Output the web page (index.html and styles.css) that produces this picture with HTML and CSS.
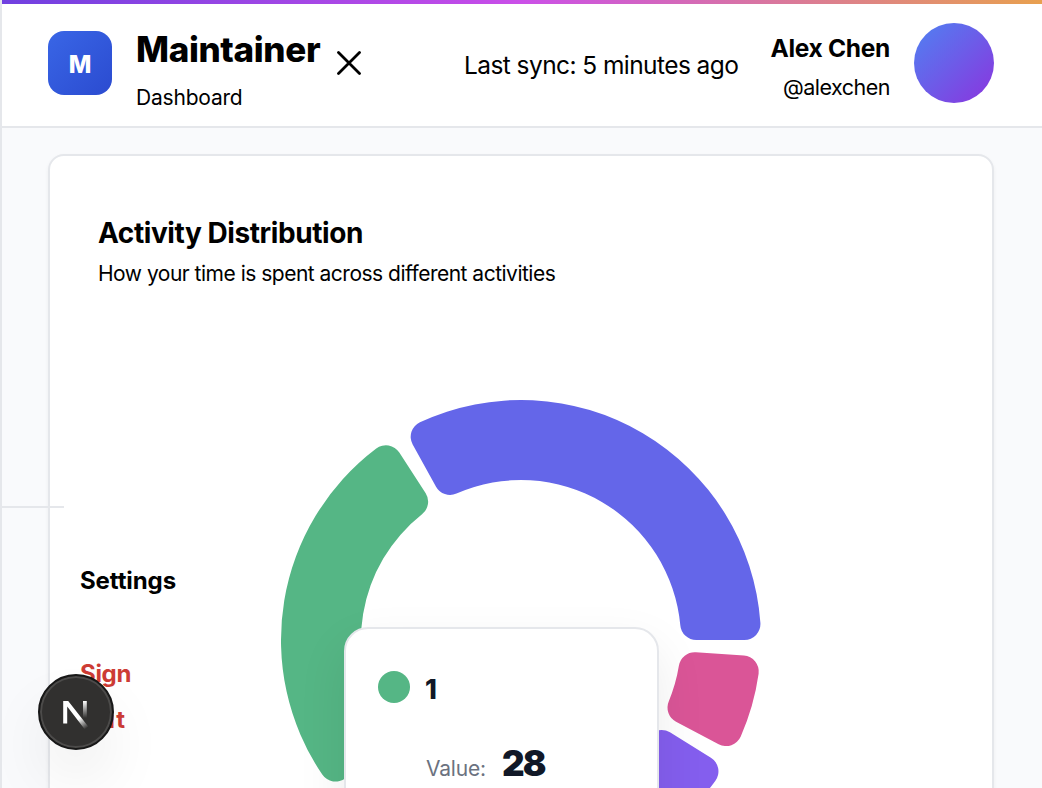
FILE: index.html
```html
<!DOCTYPE html>
<html lang="en">
<head>
<meta charset="utf-8">
<title>Maintainer Dashboard</title>
<link rel="stylesheet" href="styles.css">
</head>
<body>
<div class="app">
  <div class="accent"></div>
  <header class="header">
    <div class="logo">M</div>
    <div class="brand">
      <div class="brand-name">Maintainer</div>
      <div class="brand-sub">Dashboard</div>
    </div>
    <svg class="close" viewBox="0 0 24 24"><path d="M1.500 1.500l21 21M22.500 1.500l-21 21"/></svg>
    <div class="sync">Last sync: 5 minutes ago</div>
    <div class="user">
      <div class="user-name">Alex Chen</div>
      <div class="user-handle">@alexchen</div>
    </div>
    <div class="avatar"></div>
  </header>
  <main class="main">
    <section class="card">
      <h2 class="card-title">Activity Distribution</h2>
      <p class="card-sub">How your time is spent across different activities</p>
      <div class="chart">
        <svg id="donut" class="donut" viewBox="-240 -240 480 480"></svg>
        <div class="tooltip">
          <div class="tip-head"><span class="dot"></span><span class="tip-label">1</span></div>
          <div class="tip-row"><span class="tip-key">Value:</span><span class="tip-value">28</span></div>
        </div>
      </div>
    </section>
  </main>
  <nav class="side">
    <div class="side-rule"></div>
    <a class="side-link">Settings</a>
    <a class="side-link signout">Sign<br><span class="out">Out</span></a>
  </nav>
  <div class="badge">
    <svg class="badge-n" viewBox="0 0 28 32">
      <defs>
        <linearGradient id="diag" gradientUnits="userSpaceOnUse" x1="18" y1="20" x2="25" y2="30"><stop stop-color="#fff"/><stop offset="1" stop-color="#fff" stop-opacity="0"/></linearGradient>
        <linearGradient id="stem" gradientUnits="userSpaceOnUse" x1="0" y1="3" x2="0" y2="20"><stop stop-color="#fff"/><stop offset="1" stop-color="#fff" stop-opacity="0"/></linearGradient>
      </defs>
      <path d="M1.200 3h5l20 25.500-3.500 2.800L5.200 8.600V25.500h-4z" fill="url(#diag)"/>
      <path d="M21 3h3.800v18H21z" fill="url(#stem)"/>
    </svg>
  </div>
</div>
<script src="chart.js"></script>
</body>
</html>
```
FILE: styles.css
```css
* { box-sizing: border-box; }
body { margin: 0; font-family: Inter, "Liberation Sans", sans-serif; color: #000; background: #f9fafb; }
.app { position: relative; width: 1042px; height: 788px; overflow: hidden; background: #f9fafc; border-left: 2px solid #e5e7eb; }
.accent { height: 4px; background: linear-gradient(90deg, #7040e0, #c04be8 45%, #cb50e8 50%, #e8a04f); }
.header { display: flex; align-items: center; height: 124px; padding: 0 48px 4px 46px; background: #fff; border-bottom: 2px solid #e5e7eb; }
.header > * { flex-shrink: 0; white-space: nowrap; }
.logo { width: 64px; height: 64px; border-radius: 16px; background: linear-gradient(135deg, #3966e6, #2b4bd0); color: #fff; font-weight: 800; font-size: 24px; line-height: 67px; text-align: center; }
.brand { width: 186px; margin-left: 24px; padding-top: 14px; }
.brand-name { font-weight: 800; font-size: 35px; line-height: 45px; letter-spacing: -0.35px; }
.brand-sub { font-size: 21px; line-height: 32px; margin-top: 10px; letter-spacing: -0.2px; }
.close { width: 24px; height: 24px; margin-left: 15px; fill: none; stroke: #000; stroke-width: 2.8; stroke-linecap: round; }
.sync { width: 275px; margin-left: 103px; padding-top: 3px; font-size: 24.5px; letter-spacing: -0.57px; }
.user { width: 151px; text-align: right; padding-top: 7px; }
.user-name { font-weight: 650; font-size: 24.5px; line-height: 35px; letter-spacing: -0.3px; }
.user-handle { font-size: 21.5px; line-height: 32px; margin-top: 5px; letter-spacing: -0.5px; }
.avatar { width: 80px; height: 80px; margin-left: auto; border-radius: 50%; background: linear-gradient(135deg, #4f82f2, #8b34de); }
.main { padding: 26px 48px 0 46px; }
.card { height: 900px; padding: 58px 48px; background: #fff; border: 2px solid #e5e7eb; border-radius: 16px; box-shadow: 0 2px 4px rgba(0,0,0,.05); }
.card-title { margin: 0; font-weight: 650; font-size: 28px; line-height: 38px; letter-spacing: -0.42px; white-space: nowrap; }
.card-sub { margin: 5px 0 0; font-size: 21px; line-height: 33px; letter-spacing: -0.5px; white-space: nowrap; }
.chart { position: relative; display: flex; justify-content: center; margin-top: 110px; }
.donut { width: 480px; height: 480px; overflow: visible; }
.tooltip { position: absolute; left: 246px; top: 227px; width: 315px; height: 260px; padding: 42px 32px; background: #fff; border: 2px solid #e5e7eb; border-radius: 24px; box-shadow: 0 20px 50px rgba(0,0,0,.08); color: #111827; }
.tip-head { display: flex; align-items: center; height: 32px; }
.dot { width: 32px; height: 32px; border-radius: 50%; background: #55b685; }
.tip-label { margin: 4px 0 0 15px; font-size: 27px; font-weight: 800; }
.tip-row { display: flex; align-items: baseline; margin: 36px 0 0 48px; line-height: 49px; }
.tip-key { width: 76px; font-size: 21px; letter-spacing: -0.2px; color: #6b7280; }
.tip-value { font-size: 35px; font-weight: 900; letter-spacing: -1.8px; }
.side { position: absolute; left: 0; top: 506px; width: 170px; }
.side-rule { width: 62px; height: 2px; background: #e5e7eb; }
.side-link { display: block; margin: 50px 0 0 78px; font-size: 24px; line-height: 46px; font-weight: 650; letter-spacing: -0.1px; }
.signout { margin-top: 47px; color: #cd3c35; letter-spacing: -0.3px; }
.out { letter-spacing: 1.4px; }
.badge { position: absolute; left: 36px; top: 674px; width: 76px; height: 76px; border-radius: 50%; background: #31302f; border: 2px solid #171717; box-shadow: inset 0 0 0 2px #4c4b4a, 0 32px 64px -8px rgba(0,0,0,.1); }
.badge-n { display: block; width: 28px; height: 32px; margin: 22px 0 0 22px; }
```
FILE: chart.js
```javascript
// Draws ring sectors with rounded corners; angles run counter-clockwise in degrees.
const OUTER = 240, INNER = 160, CORNER = 16;
const sectors = [
  { from: 0, to: 119, color: '#6466e9' },
  { from: 123, to: 218.2, color: '#55b685' },
  { from: -27.8, to: -4, color: '#da5597' },
  { from: -70, to: -31.8, color: '#845eee' }
];
const point = (radius, degrees) => {
  const a = degrees * Math.PI / 180;
  return (radius * Math.cos(a)).toFixed(2) + ' ' + (-radius * Math.sin(a)).toFixed(2);
};
const outerAngle = Math.asin(CORNER / (OUTER - CORNER));
const innerAngle = Math.asin(CORNER / (INNER + CORNER));
const outerLine = (OUTER - CORNER) * Math.cos(outerAngle);
const innerLine = (INNER + CORNER) * Math.cos(innerAngle);
const o = outerAngle * 180 / Math.PI, i = innerAngle * 180 / Math.PI;
const donut = document.getElementById('donut');
for (const s of sectors) {
  const corner = `A${CORNER} ${CORNER} 0 0 0 `;
  const path = document.createElementNS('http://www.w3.org/2000/svg', 'path');
  path.setAttribute('d',
    `M${point(outerLine, s.from)}${corner}${point(OUTER, s.from + o)}` +
    `A${OUTER} ${OUTER} 0 0 0 ${point(OUTER, s.to - o)}${corner}${point(outerLine, s.to)}` +
    `L${point(innerLine, s.to)}${corner}${point(INNER, s.to - i)}` +
    `A${INNER} ${INNER} 0 0 1 ${point(INNER, s.from + i)}${corner}${point(innerLine, s.from)}Z`);
  path.setAttribute('fill', s.color);
  donut.appendChild(path);
}
```
